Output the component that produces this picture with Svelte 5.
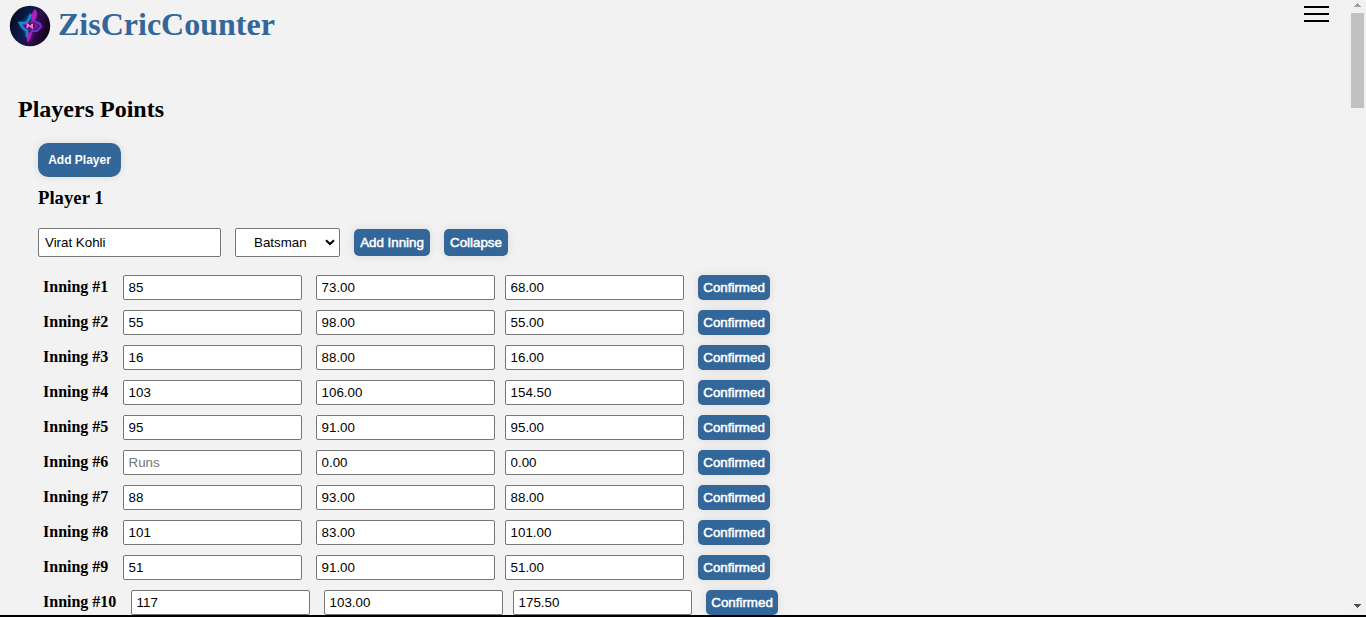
<script>
  const innings = [
    ['85', '73.00', '68.00'],
    ['55', '98.00', '55.00'],
    ['16', '88.00', '16.00'],
    ['103', '106.00', '154.50'],
    ['95', '91.00', '95.00'],
    ['', '0.00', '0.00'],
    ['88', '93.00', '88.00'],
    ['101', '83.00', '101.00'],
    ['51', '91.00', '51.00'],
    ['117', '103.00', '175.50']
  ];
</script>

<div class="window">
  <div class="page">
    <header>
      <div class="brand">
        <svg class="logo" width="42" height="42" viewBox="0 0 42 42" aria-hidden="true">
          <defs>
            <linearGradient id="disc" x1="0" y1="0.3" x2="1" y2="0.7">
              <stop offset="0" stop-color="#060b1c" />
              <stop offset="0.35" stop-color="#0b1c4a" />
              <stop offset="0.65" stop-color="#2a0c48" />
              <stop offset="1" stop-color="#0d0412" />
            </linearGradient>
            <filter id="glow" x="-50%" y="-50%" width="200%" height="200%">
              <feGaussianBlur stdDeviation="1.8" />
            </filter>
            <filter id="soft" x="-20%" y="-20%" width="140%" height="140%">
              <feGaussianBlur stdDeviation="0.7" />
            </filter>
          </defs>
          <circle cx="21" cy="21" r="20.2" fill="url(#disc)" />
          <g filter="url(#glow)" opacity="0.6" fill="none" stroke-width="4">
            <path d="M21 10 18 16 12 19 17 25 18 32" stroke="#1262b5" />
            <path d="M26 6 25 16 31 21 24 25 20 36" stroke="#7a169a" />
          </g>
          <g filter="url(#soft)" fill="none">
            <path d="M22 9 20 14 17 18 11 18 14 23 18 26 18 32" stroke="#168bd0" stroke-width="2.6" />
            <path d="M26 4C22 9 22 13 22.500 18L26 15C29 10 28.500 7 26 4Z" fill="#b51dbb" />
            <path d="M18.500 38C22 34 23 29 23 25L19 29C17 33 18 34 18.500 38Z" fill="#b51dbb" />
            <path d="M25 16 31 19 32 22 28 26 23 26" stroke="#6b35c9" stroke-width="2" />
            <path d="M14 21Q21 14 28 21Q21 28 14 21Z" fill="#23083c" stroke="#8b22b1" stroke-width="1.2" />
            <path d="M18.500 23V19.500L23 22.500V19" stroke="#ff70d4" stroke-width="2" />
          </g>
        </svg>
        <h1>ZisCricCounter</h1>
      </div>
      <div class="menu"><span></span><span></span><span></span></div>
    </header>

    <main>
      <h2>Players Points</h2>
      <section>
        <button class="add">Add Player</button>
        <h3>Player 1</h3>
        <div class="player">
          <input value="Virat Kohli" />
          <div class="select">
            <span>Batsman</span>
            <svg width="10" height="7" viewBox="0 0 10 7"><path d="M1 1.2 5 5 9 1.2" fill="none" stroke="#000" stroke-width="2" /></svg>
          </div>
          <button class="inning-add">Add Inning</button>
          <button class="collapse">Collapse</button>
        </div>
        {#each innings as [runs, rate, points], i}
          <div class="inning">
            <b>Inning #{i + 1}</b>
            <input value={runs} placeholder="Runs" />
            <input value={rate} />
            <input value={points} />
            <button class="confirm">Confirmed</button>
          </div>
        {/each}
      </section>
    </main>
  </div>
  <div class="scrollbar">
    <svg width="7" height="4" viewBox="0 0 7 4"><path d="M3 0h1v1h1v1h1v1h1v1H0V3h1V2h1V1h1z" fill="#a3a3a3" /></svg>
    <div class="thumb"></div>
    <svg width="7" height="4" viewBox="0 0 7 4"><path d="M0 0h7v1H6v1H5v1H4v1H3V3H2V2H1V1H0z" fill="#505050" /></svg>
  </div>
</div>

<style>
  :global(body) { margin: 0; overflow: hidden; background: #f2f2f2; }
  .window {
    display: flex;
    box-sizing: border-box;
    height: 617px;
    border-bottom: 2px solid #000;
    overflow: hidden;
    background: #f2f2f2;
    color: #000;
    font-family: "Liberation Serif", "Times New Roman", serif;
  }
  .page { flex: 1; min-width: 0; overflow: hidden; }
  header { display: flex; justify-content: space-between; height: 96px; }
  .brand { display: flex; align-items: flex-start; padding: 5px 0 0 9px; }
  .logo { display: block; }
  h1 { margin: 1px 0 0 7px; font-size: 32px; line-height: 37px; color: #336699; }
  .menu { display: flex; flex-direction: column; gap: 5px; padding: 6px 20px 0 0; }
  .menu span { width: 25px; height: 2px; background: #000; }
  main { padding-left: 18px; }
  h2 { margin: 0; font-size: 24px; line-height: 27px; }
  section { display: flex; flex-direction: column; padding: 20px 0 0 20px; }
  h3 { margin: 10px 0 20px; font-size: 18.72px; line-height: 21px; }
  button {
    flex: none;
    box-sizing: border-box;
    padding: 0;
    border: 0;
    border-radius: 5px;
    background: #336699;
    box-shadow: 0 0 10px rgba(0, 0, 0, 0.1);
    color: #fff;
    font: 13.333px "Liberation Sans", Arial, sans-serif;
    -webkit-text-stroke: 0.5px #fff;
    white-space: nowrap;
  }
  .add { width: 83px; height: 34px; border-radius: 10px; font-size: 12px; font-weight: bold; -webkit-text-stroke: 0; }
  .player { display: flex; align-items: center; height: 29px; margin-bottom: 18px; }
  input, .select {
    box-sizing: border-box;
    border: 1px solid #767676;
    border-radius: 2px;
    background: #fff;
    color: #000;
    font: 13.333px "Liberation Sans", Arial, sans-serif;
  }
  input::placeholder { color: #757575; }
  .player input { width: 183px; height: 29px; padding: 0 6px; }
  .select {
    display: flex;
    align-items: center;
    justify-content: space-between;
    width: 105px;
    height: 29px;
    margin: 0 14px;
    padding: 0 4px 0 18px;
  }
  .inning-add { width: 76px; height: 27px; margin-right: 14px; }
  .collapse { width: 64px; height: 27px; }
  .inning { display: flex; align-items: center; flex: none; height: 25px; margin: 0 0 10px 5px; }
  .inning b { margin-right: 14.7px; padding-bottom: 2px; font-size: 16px; line-height: 18px; }
  .inning input { width: 179px; height: 25px; margin-right: 14px; padding: 0 4.5px; }
  .inning input:nth-of-type(2) { margin-right: 10px; }
  .confirm { width: 72px; height: 25px; }
  .scrollbar {
    display: flex;
    flex-direction: column;
    align-items: center;
    box-sizing: border-box;
    width: 17px;
    padding: 3px 0 7px;
    background: #f1f1f1;
  }
  .thumb { width: 13px; height: 95px; margin: 6px 0 auto; background: #c1c1c1; }
</style>
